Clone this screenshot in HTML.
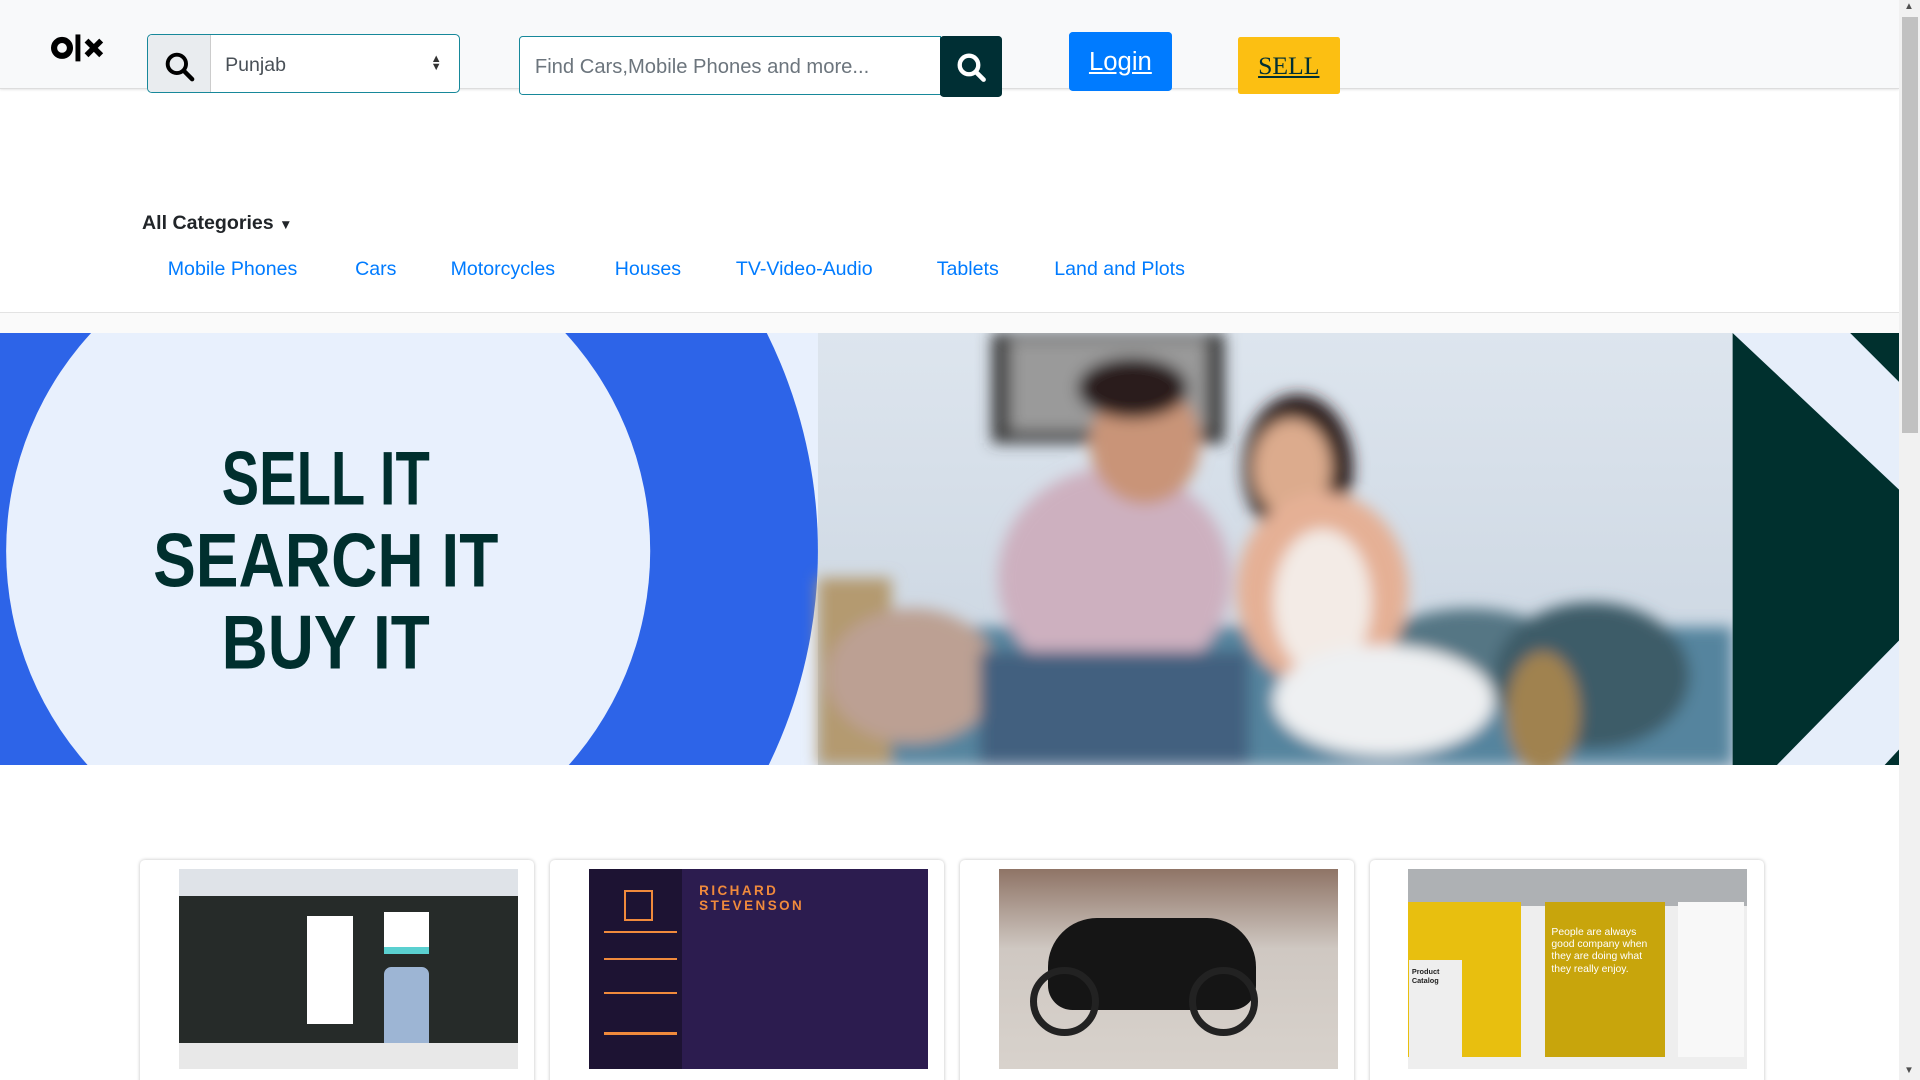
<!DOCTYPE html>
<html><head><meta charset="utf-8"><style>
html,body{margin:0;padding:0;width:1920px;height:1080px;overflow:hidden;background:#fff}
#w{zoom:1.22449;width:1568px;height:882px;position:relative;overflow:hidden;font-family:"Liberation Sans",sans-serif}
.a{position:absolute}
</style></head><body><div id="w">
<div class="a" style="left:0;top:0;width:1551px;height:72px;background:#f8f9fa;border-bottom:1px solid #ddd;box-shadow:0 1px 2px rgba(0,0,0,.12)"></div>
<svg class="a" style="left:42px;top:26px" width="46" height="26" viewBox="0 0 46 26"><circle cx="9" cy="13" r="6.5" fill="none" stroke="#000" stroke-width="5"/><rect x="20" y="2" width="4" height="22" fill="#000"/><path d="M29 7l12 12M41 7l-12 12" stroke="#000" stroke-width="4.5"/></svg>
<div class="a" style="left:120px;top:28px;width:254px;height:46px;border:1px solid #17889a;border-radius:4px;background:#fff;overflow:hidden">
 <div class="a" style="left:0;top:0;width:51px;height:46px;background:#e9ecef;border-right:1px solid #ccc"></div>
 <svg class="a" style="left:13px;top:13px" width="26" height="26" viewBox="0 0 26 26"><circle cx="10.5" cy="10.5" r="7.5" fill="none" stroke="#000" stroke-width="3.2"/><path d="M16 16l7 7" stroke="#000" stroke-width="3.6" stroke-linecap="round"/></svg>
 <div class="a" style="left:63px;top:15px;font-size:16px;color:#495057">Punjab</div>
 <div class="a" style="left:231px;top:16px;font-size:9px;line-height:7px;color:#333">▲<br>▼</div>
</div>
<div class="a" style="left:424px;top:29px;width:343px;height:47px;border:1px solid #17889a;border-radius:3px 0 0 3px;background:#fff"><div class="a" style="left:12px;top:16px;font-size:16.5px;color:#6c757d">Find Cars,Mobile Phones and more...</div></div>
<div class="a" style="left:768px;top:29px;width:50px;height:50px;background:#002f34;border-radius:3px"><svg class="a" style="left:12px;top:13px" width="27" height="27" viewBox="0 0 26 26"><circle cx="11" cy="11" r="7.3" fill="none" stroke="#fff" stroke-width="3.4"/><path d="M16.5 16.5l6 6" stroke="#fff" stroke-width="3.6" stroke-linecap="round"/></svg></div>
<div class="a" style="left:873px;top:26px;width:84px;height:48px;background:#007bff;border-radius:3px;color:#fff;font-size:21px;text-align:center;line-height:50px;text-decoration:underline">Login</div>
<div class="a" style="left:1011px;top:30px;width:83px;height:47px;background:#fcbf12;border-radius:2px;color:#002f34;font:21px 'Liberation Serif',serif;text-align:center;line-height:47px;text-decoration:underline">SELL</div>
<div class="a" style="left:116px;top:173px;font-weight:bold;font-size:16px;color:#212529">All Categories <span style="font-size:11px">▼</span></div>
<div class="a" style="top:211px;left:0;font-size:16px;color:#007bff;white-space:nowrap">
<span class="a" style="left:137px">Mobile Phones</span><span class="a" style="left:290px">Cars</span><span class="a" style="left:368px">Motorcycles</span><span class="a" style="left:502px">Houses</span><span class="a" style="left:601px">TV-Video-Audio</span><span class="a" style="left:765px">Tablets</span><span class="a" style="left:861px">Land and Plots</span></div>
<div class="a" style="left:0;top:255px;width:1551px;height:1px;background:#e3e3e3"></div>
<div class="a" style="left:0;top:256px;width:1551px;height:16px;background:#fafafa"></div>
<svg class="a" style="left:0;top:272px" width="1551" height="353" viewBox="0 0 1551 353">
<defs><filter id="b"><feGaussianBlur stdDeviation="6"/></filter>
<linearGradient id="wall" x1="0" y1="0" x2="0" y2="1"><stop offset="0" stop-color="#dde5ee"/><stop offset="1" stop-color="#c8d3df"/></linearGradient></defs>
<rect width="668" height="353" fill="#e8f0fd"/>
<circle cx="268" cy="178" r="400" fill="#2d64e8"/>
<circle cx="268" cy="178" r="263" fill="#e8f0fd"/>
<g font-family="Liberation Sans,sans-serif" font-weight="bold" fill="#002f2e" text-anchor="middle">
<text x="266" y="140" font-size="62" textLength="170" lengthAdjust="spacingAndGlyphs">SELL IT</text>
<text x="266" y="207" font-size="62" textLength="282" lengthAdjust="spacingAndGlyphs">SEARCH IT</text>
<text x="266" y="274" font-size="62" textLength="170" lengthAdjust="spacingAndGlyphs">BUY IT</text></g>
<rect x="668" width="747" height="353" fill="url(#wall)"/>
<g filter="url(#b)">
<rect x="810" y="0" width="190" height="90" fill="#3a3a3a"/><rect x="825" y="5" width="160" height="75" fill="#9a9a9a"/>
<rect x="668" y="240" width="747" height="113" fill="#55849e"/>
<rect x="668" y="200" width="60" height="153" fill="#b49a70"/>
<ellipse cx="745" cy="280" rx="70" ry="55" fill="#bca093"/>
<ellipse cx="1200" cy="265" rx="80" ry="40" fill="#557684"/>
<ellipse cx="1300" cy="280" rx="80" ry="60" fill="#3d5c68"/>
<ellipse cx="910" cy="200" rx="95" ry="90" fill="#cdb0bf"/>
<rect x="800" y="260" width="220" height="93" fill="#42607f"/>
<ellipse cx="935" cy="90" rx="45" ry="50" fill="#c99478"/>
<ellipse cx="925" cy="45" rx="45" ry="25" fill="#2a1e1a"/>
<ellipse cx="1060" cy="110" rx="45" ry="60" fill="#2a1e1a"/>
<ellipse cx="1055" cy="110" rx="32" ry="40" fill="#dcab8d"/>
<ellipse cx="1080" cy="210" rx="70" ry="80" fill="#e5b095"/>
<ellipse cx="1080" cy="220" rx="40" ry="60" fill="#f3ebe6"/>
<ellipse cx="1130" cy="300" rx="90" ry="45" fill="#eef0f2"/>
<ellipse cx="1260" cy="310" rx="30" ry="50" fill="#a08250"/>
</g>
<rect x="1415" y="0" width="136" height="353" fill="#e6eefa"/>
<polygon points="1415,0 1551,128 1551,251 1451,353 1415,353" fill="#00302e"/>
<polygon points="1511,0 1551,0 1551,40" fill="#00302e"/>
<polygon points="1551,340 1551,353 1539,353" fill="#00302e"/>
</svg>
<div class="a" style="left:0;top:702px;width:1551px">
 <div class="a" style="left:114px;width:322px;height:200px;background:#fff;border-radius:4px;box-shadow:0 0 3px rgba(0,0,0,.25)"></div>
 <div class="a" style="left:449px;width:322px;height:200px;background:#fff;border-radius:4px;box-shadow:0 0 3px rgba(0,0,0,.25)"></div>
 <div class="a" style="left:784px;width:322px;height:200px;background:#fff;border-radius:4px;box-shadow:0 0 3px rgba(0,0,0,.25)"></div>
 <div class="a" style="left:1119px;width:322px;height:200px;background:#fff;border-radius:4px;box-shadow:0 0 3px rgba(0,0,0,.25)"></div>
</div>
<div class="a" style="left:146px;top:710px;width:277px;height:163px;background:#262b29;overflow:hidden">
 <div class="a" style="left:0;top:0;width:277px;height:22px;background:#dfe3e8"></div>
 <div class="a" style="left:105px;top:38px;width:37px;height:88px;background:#fff"></div>
 <div class="a" style="left:168px;top:80px;width:36px;height:83px;background:#9db5d4;border-radius:6px"></div>
 <div class="a" style="left:168px;top:35px;width:36px;height:28px;background:#fff;border-bottom:6px solid #5ad0d0"></div>
 <div class="a" style="left:0;top:142px;width:277px;height:21px;background:#e8e8e8"></div>
</div>
<div class="a" style="left:481px;top:710px;width:277px;height:163px;background:#2c1c4f">
 <div class="a" style="left:0;top:0;width:76px;height:163px;background:#1d1333"></div>
 <div class="a" style="left:90px;top:12px;color:#f08a3c;font:bold 11px 'Liberation Sans',sans-serif;letter-spacing:2px;line-height:12px">RICHARD<br>STEVENSON</div>
 <div class="a" style="left:29px;top:17px;width:20px;height:22px;border:2px solid #f08a3c"></div>
 <div class="a" style="left:12px;top:50px;width:60px;height:2px;background:#f08a3c"></div><div class="a" style="left:12px;top:72px;width:60px;height:2px;background:#f08a3c"></div><div class="a" style="left:12px;top:100px;width:60px;height:2px;background:#f08a3c"></div><div class="a" style="left:12px;top:133px;width:60px;height:2px;background:#f08a3c"></div>
</div>
<div class="a" style="left:816px;top:710px;width:277px;height:163px;background:linear-gradient(180deg,#8f7466 0%,#cfc8c2 40%,#d8d2cc 100%)">
 <div class="a" style="left:40px;top:40px;width:170px;height:75px;background:#151515;border-radius:40px 40px 20px 20px"></div>
 <div class="a" style="left:25px;top:80px;width:45px;height:45px;border:6px solid #222;border-radius:50%"></div>
 <div class="a" style="left:155px;top:80px;width:45px;height:45px;border:6px solid #222;border-radius:50%"></div>
</div>
<div class="a" style="left:1150px;top:710px;width:277px;height:163px;background:#eee">
 <div class="a" style="left:0;top:0;width:277px;height:30px;background:#aeb1b4"></div>
 <div class="a" style="left:0;top:27px;width:92px;height:126px;background:#e8bf0f"></div>
 <div class="a" style="left:1px;top:74px;width:43px;height:86px;background:#eee;font:bold 6px sans-serif;color:#222;padding:6px 2px;box-sizing:border-box">Product Catalog</div>
 <div class="a" style="left:112px;top:27px;width:98px;height:126px;background:#c8a50c;color:#fff;font-size:8.5px;line-height:10px;padding:20px 5px;box-sizing:border-box">People are always good company when they are doing what they really enjoy.</div>
 <div class="a" style="left:220px;top:27px;width:54px;height:126px;background:#f8f8f8"></div>
</div>
<div class="a" style="left:1551px;top:0;width:17px;height:882px;background:#f1f1f1"></div>
<div class="a" style="left:1553px;top:14px;width:13px;height:340px;background:#c1c1c1"></div>
<div class="a" style="left:1555px;top:1px;font-size:8px;color:#505050">▲</div>
<div class="a" style="left:1555px;top:870px;font-size:8px;color:#505050">▼</div>
</div></body></html>
